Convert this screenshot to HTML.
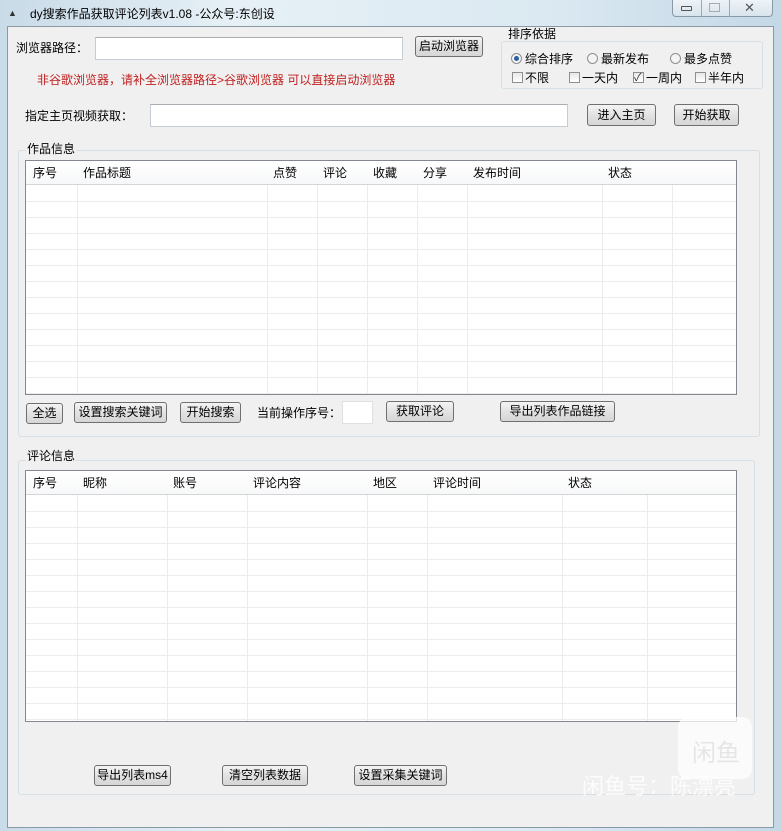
<!DOCTYPE html>
<html><head><meta charset="utf-8"><style>
*{box-sizing:border-box;margin:0;padding:0}
body{width:781px;height:831px;position:relative;overflow:hidden;background:linear-gradient(90deg,#c9dbe8,#e6f0f6 30%,#dbe9f2 70%,#c4d8e6);font-family:"Liberation Sans","Noto Sans CJK SC",sans-serif;font-size:12px;color:#000}
.a{position:absolute}
.client{left:7px;top:26px;width:767px;height:802px;background:#f0f0f0;border:1px solid #8a99a6}
.inp{background:#fff;border:1px solid #c5ccd3;border-top-color:#abadb3}
.btn{background:linear-gradient(#f4f4f4,#e2e2e2 50%,#d6d6d6);border:1px solid #707070;border-radius:3px;text-align:center;line-height:19px;font-size:12px}
.grp{border:1px solid #d5dfe5;border-radius:3px}
.gt{background:#f0f0f0;padding:0 1px;line-height:14px}
.tbl{background:#fff;border:1px solid #828790;overflow:hidden}
.hd{position:absolute;top:0;left:0;right:0;height:24px;border-bottom:1px solid #d5d5d5;background:linear-gradient(#fff,#f7f8f9)}
.hd span{position:absolute;top:3px}
.vl{position:absolute;top:0;bottom:0;width:1px;background:#ececec}
.hl{position:absolute;left:0;right:0;height:1px;background:#ececec}
.cb{display:inline-block;width:11px;height:11px;border:1px solid #8f8f8f;background:linear-gradient(#e8e8e8,#fff);vertical-align:-1px;margin-right:2px}
.rb{display:inline-block;width:11px;height:11px;border:1px solid #8f8f8f;border-radius:50%;background:#f4f4f4;vertical-align:-1px;margin-right:3px;position:relative}
</style></head><body>
<div class="a" style="left:8px;top:8px;font-size:9px;color:#333">▲</div>
<div class="a" style="left:30px;top:5px;font-size:12px">dy搜索作品获取评论列表v1.08 -公众号:东创设</div>
<div class="a" style="left:672px;top:0;width:101px;height:17px;border:1px solid #8a99a6;border-top:none;border-radius:0 0 4px 4px;background:linear-gradient(#eef4f8,#d8e4ec)"></div>
<div class="a" style="left:701px;top:0;width:1px;height:17px;background:#9aabb8"></div>
<div class="a" style="left:729px;top:0;width:1px;height:17px;background:#9aabb8"></div>
<div class="a" style="left:681px;top:6px;width:11px;height:5px;border:1px solid #555;border-radius:1px"></div>
<div class="a" style="left:709px;top:3px;width:11px;height:9px;border:1px solid #aaa"></div>
<div class="a" style="left:744px;top:0px;font-size:13px;color:#555">✕</div>

<div class="a client"></div>

<div class="a" style="left:16px;top:39px">浏览器路径：</div>
<div class="a inp" style="left:95px;top:37px;width:308px;height:23px"></div>
<div class="a btn" style="left:415px;top:36px;width:68px;height:21px">启动浏览器</div>
<div class="a" style="left:37px;top:71px;color:#c02020">非谷歌浏览器，请补全浏览器路径&gt;谷歌浏览器 可以直接启动浏览器</div>

<div class="a grp" style="left:501px;top:41px;width:262px;height:48px"></div>
<div class="a gt" style="left:507px;top:27px">排序依据</div>
<div class="a" style="left:511px;top:50px"><span class="rb"><i style="position:absolute;left:2px;top:2px;width:5px;height:5px;border-radius:50%;background:#2a5f9e"></i></span>综合排序</div>
<div class="a" style="left:587px;top:50px"><span class="rb"></span>最新发布</div>
<div class="a" style="left:670px;top:50px"><span class="rb"></span>最多点赞</div>
<div class="a" style="left:512px;top:69px"><span class="cb"></span>不限</div>
<div class="a" style="left:569px;top:69px"><span class="cb"></span>一天内</div>
<div class="a" style="left:633px;top:69px"><span class="cb" style="position:relative"><i style="position:absolute;left:0;top:-4px;font-style:normal;font-size:11px;color:#333">✓</i></span>一周内</div>
<div class="a" style="left:695px;top:69px"><span class="cb"></span>半年内</div>

<div class="a" style="left:25px;top:107px">指定主页视频获取：</div>
<div class="a inp" style="left:150px;top:104px;width:418px;height:23px"></div>
<div class="a btn" style="left:587px;top:104px;width:69px;height:22px;line-height:20px">进入主页</div>
<div class="a btn" style="left:674px;top:104px;width:65px;height:22px;line-height:20px">开始获取</div>

<div class="a grp" style="left:18px;top:150px;width:742px;height:287px"></div>
<div class="a gt" style="left:26px;top:142px">作品信息</div>
<div class="a tbl" style="left:25px;top:160px;width:712px;height:235px">
<div class="hl" style="top:40px"></div><div class="hl" style="top:56px"></div><div class="hl" style="top:72px"></div><div class="hl" style="top:88px"></div><div class="hl" style="top:104px"></div><div class="hl" style="top:120px"></div><div class="hl" style="top:136px"></div><div class="hl" style="top:152px"></div><div class="hl" style="top:168px"></div><div class="hl" style="top:184px"></div><div class="hl" style="top:200px"></div><div class="hl" style="top:216px"></div><div class="hl" style="top:232px"></div>
<div class="vl" style="left:51px"></div><div class="vl" style="left:241px"></div><div class="vl" style="left:291px"></div><div class="vl" style="left:341px"></div><div class="vl" style="left:391px"></div><div class="vl" style="left:441px"></div><div class="vl" style="left:576px"></div><div class="vl" style="left:646px"></div>
<div class="hd"><span style="left:7px">序号</span><span style="left:57px">作品标题</span><span style="left:247px">点赞</span><span style="left:297px">评论</span><span style="left:347px">收藏</span><span style="left:397px">分享</span><span style="left:447px">发布时间</span><span style="left:582px">状态</span></div>
</div>

<div class="a btn" style="left:26px;top:403px;width:37px;height:21px">全选</div>
<div class="a btn" style="left:74px;top:402px;width:93px;height:21px">设置搜索关键词</div>
<div class="a btn" style="left:180px;top:402px;width:61px;height:21px">开始搜索</div>
<div class="a" style="left:257px;top:404px">当前操作序号：</div>
<div class="a inp" style="left:342px;top:401px;width:31px;height:23px;border-color:#e0e0e0"></div>
<div class="a btn" style="left:386px;top:401px;width:68px;height:21px">获取评论</div>
<div class="a btn" style="left:500px;top:401px;width:115px;height:21px">导出列表作品链接</div>

<div class="a grp" style="left:18px;top:460px;width:737px;height:335px"></div>
<div class="a gt" style="left:26px;top:449px">评论信息</div>
<div class="a tbl" style="left:25px;top:470px;width:712px;height:252px">
<div class="hl" style="top:40px"></div><div class="hl" style="top:56px"></div><div class="hl" style="top:72px"></div><div class="hl" style="top:88px"></div><div class="hl" style="top:104px"></div><div class="hl" style="top:120px"></div><div class="hl" style="top:136px"></div><div class="hl" style="top:152px"></div><div class="hl" style="top:168px"></div><div class="hl" style="top:184px"></div><div class="hl" style="top:200px"></div><div class="hl" style="top:216px"></div><div class="hl" style="top:232px"></div><div class="hl" style="top:248px"></div>
<div class="vl" style="left:51px"></div><div class="vl" style="left:141px"></div><div class="vl" style="left:221px"></div><div class="vl" style="left:341px"></div><div class="vl" style="left:401px"></div><div class="vl" style="left:536px"></div><div class="vl" style="left:621px"></div>
<div class="hd"><span style="left:7px">序号</span><span style="left:57px">昵称</span><span style="left:147px">账号</span><span style="left:227px">评论内容</span><span style="left:347px">地区</span><span style="left:407px">评论时间</span><span style="left:542px">状态</span></div>
</div>
<div class="a" style="left:678px;top:717px;width:74px;height:62px;border-radius:10px;background:rgba(255,255,255,0.75)"></div>
<div class="a" style="left:692px;top:733px;font-size:24px;color:#e6e6e6">闲鱼</div>
<div class="a" style="left:582px;top:769px;font-size:22px;color:rgba(255,255,255,0.8)">闲鱼号：陈漂亮</div>

<div class="a btn" style="left:94px;top:765px;width:77px;height:21px">导出列表ms4</div>
<div class="a btn" style="left:222px;top:765px;width:86px;height:21px">清空列表数据</div>
<div class="a btn" style="left:354px;top:765px;width:93px;height:21px">设置采集关键词</div>
</body></html>
